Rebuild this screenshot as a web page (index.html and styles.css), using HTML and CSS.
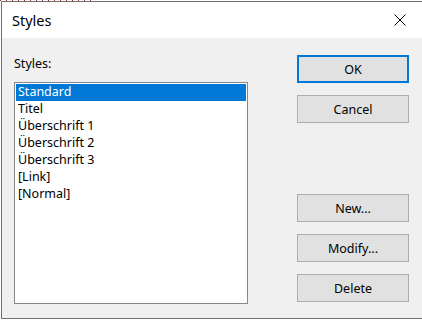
FILE: index.html
```html
<!DOCTYPE html>
<html lang="de">
<head>
    <meta charset="UTF-8" />
    <meta name="viewport" content="width=device-width, initial-scale=1.0" />
    <title>Styles</title>
    <link rel="stylesheet" href="styles.css">
</head>
<body>
    <div class="dialog">
        <div class="titlebar">
            <span class="title">Styles</span>
            <button class="close" aria-label="Close">
                <svg width="12" height="12" viewBox="0 0 12 12">
                    <path d="M0.5 0.5 L11.5 11.5 M11.5 0.5 L0.5 11.5" stroke="#000" stroke-width="1" fill="none" />
                </svg>
            </button>
        </div>

        <div class="content">
            <!-- Liste -->
            <div class="styles-col">
                <label class="list-label">Styles:</label>
                <ul class="style-list">
                    <li class="selected">Standard</li>
                    <li>Titel</li>
                    <li>Überschrift 1</li>
                    <li>Überschrift 2</li>
                    <li>Überschrift 3</li>
                    <li>[Link]</li>
                    <li>[Normal]</li>
                </ul>
            </div>

            <!-- Buttons -->
            <div class="button-col">
                <button class="btn default">OK</button>
                <button class="btn">Cancel</button>
                <div class="spacer"></div>
                <button class="btn">New...</button>
                <button class="btn">Modify...</button>
                <button class="btn">Delete</button>
            </div>
        </div>
    </div>
</body>
</html>
```

FILE: styles.css
```css
*, *::before, *::after {
    box-sizing: border-box;
    margin: 0;
    padding: 0;
}

html, body {
    width: 422px;
    height: 320px;
    overflow: hidden;
}

body {
    background-color: #FFFFFF;
    /* roter gepunkteter Rand vom Fenster dahinter */
    background-image: repeating-linear-gradient(90deg, #A03030 0 1px, transparent 1px 6px);
    background-size: 96px 1px;
    background-repeat: no-repeat;
    font-family: 'Noto Sans', 'Open Sans', sans-serif;
    font-size: 12.5px;
    color: #000000;
}

.dialog {
    margin: 1px 0 0 1px;
    width: 440px;
    height: 318px;
    border: 1px solid #707070;
    background: #F0F0F0;
    display: flex;
    flex-direction: column;
}

/* Titelleiste */
.titlebar {
    height: 36px;
    background: #FFFFFF;
    display: flex;
    align-items: center;
    padding-left: 10px;
    flex-shrink: 0;
}

    .titlebar .title {
        font-size: 14.5px;
        flex: 1;
        padding-bottom: 1px;
    }

    .titlebar .close {
        width: 46px;
        height: 36px;
        margin-right: 17px;
        border: none;
        background: transparent;
        display: flex;
        align-items: center;
        justify-content: center;
    }

/* Inhalt */
.content {
    flex: 1;
    display: flex;
    padding: 17px 0 0 12px;
}

.styles-col {
    display: flex;
    flex-direction: column;
    width: 234px;
}

.list-label {
    height: 27px;
    line-height: 18px;
}

.style-list {
    list-style: none;
    height: 222px;
    border: 1px solid #828790;
    background: #FFFFFF;
    padding: 1px 1px;
}

    .style-list li {
        height: 17px;
        line-height: 16px;
        padding-left: 2px;
        white-space: nowrap;
    }

        .style-list li.selected {
            background: #0078D7;
            color: #FFFFFF;
        }

.button-col {
    display: flex;
    flex-direction: column;
    gap: 12px;
    margin-left: 49px;
    width: 112px;
}

.spacer {
    height: 47px;
}

.btn {
    height: 28px;
    border: 1px solid #ADADAD;
    background: #E1E1E1;
    font-family: inherit;
    font-size: inherit;
    color: #000000;
}

    .btn.default {
        border: 2px solid #0078D7;
    }
```
